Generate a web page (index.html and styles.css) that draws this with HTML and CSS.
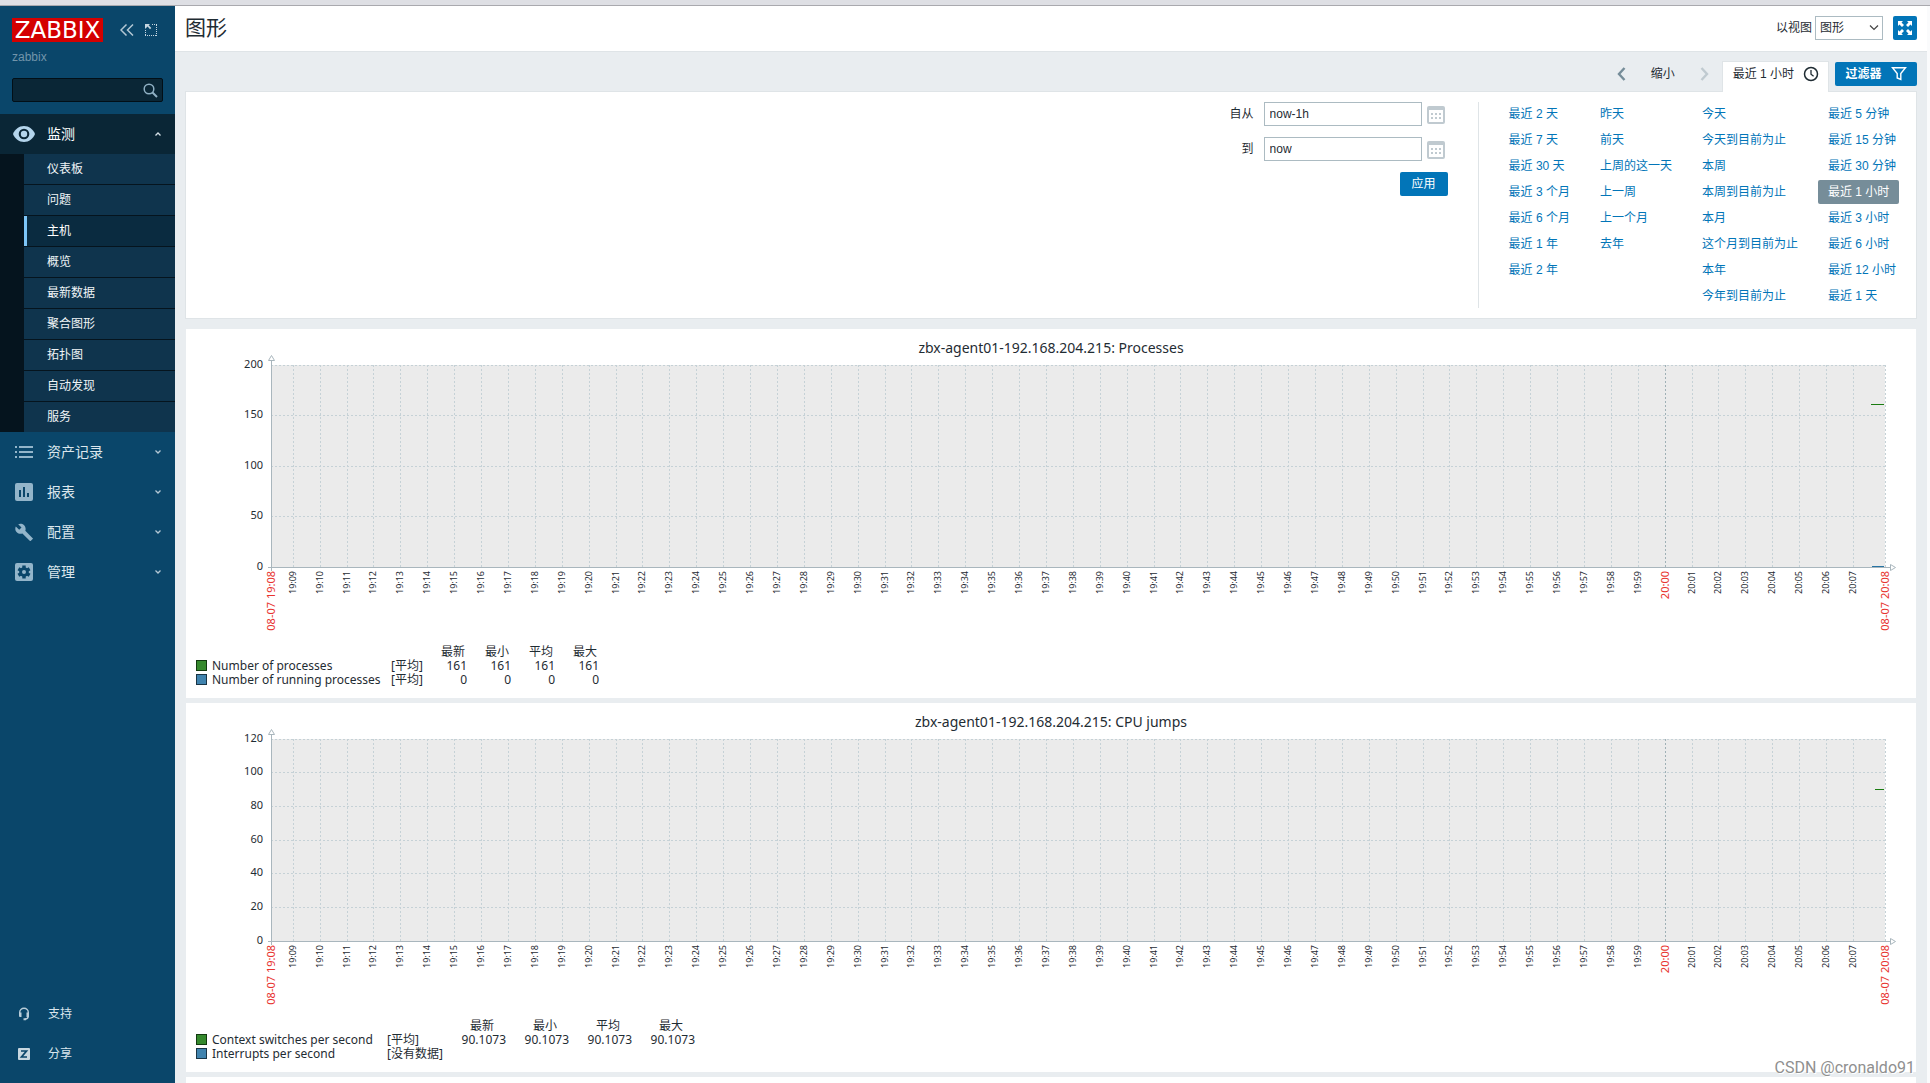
FILE: index.html
```html
<!DOCTYPE html>
<html lang="zh-CN">
<head>
<meta charset="utf-8">
<meta name="viewport" content="width=device-width, initial-scale=1">
<title>图形 - Zabbix</title>
<link rel="stylesheet" href="styles.css">
</head>
<body>
<div class="topline"></div>
<div class="shell">
  <aside class="sidebar">
    <div class="brand">
      <a class="logo" href="#">ZABBIX</a>
      <div class="brand-tools">
        <button class="icon-btn" type="button" aria-label="收起侧边栏"><svg width="14" height="12" viewBox="0 0 14 12"><path d="M6.500 .5 1 6l5.500 5.500M13 .5 7.500 6l5.500 5.500" fill="none" stroke="#b3c7d4" stroke-width="1.500"/></svg></button>
        <button class="icon-btn" type="button" aria-label="隐藏侧边栏"><svg width="12" height="12" viewBox="0 0 12 12"><path d="M7 .5h5M11.500 1v11M0 11.500h11M.5 6v5" fill="none" stroke="#c6d6e0" stroke-dasharray="1 1" shape-rendering="crispEdges"/><path d="M0 0h5L3.700 1.300 6.300 4 5 5.300 2.600 2.600 0 5z" fill="#c6d6e0"/></svg></button>
      </div>
    </div>
    <div class="server">zabbix</div>
    <form class="search">
      <input type="text" aria-label="搜索">
      <button class="icon-btn" type="button" aria-label="搜索"><svg width="15" height="15" viewBox="0 0 15 15"><circle cx="6" cy="6" r="4.800" fill="none" stroke="#8fb0c4" stroke-width="1.500"/><path d="m9.500 9.500 4.500 4.500" stroke="#8fb0c4" stroke-width="2"/></svg></button>
    </form>
    <nav class="menu">
      <a class="menu-item open" href="#">
        <svg width="24" height="18" viewBox="0 0 24 18"><path d="M12 1C7 1 2.800 4.300 1 9c1.800 4.700 6 8 11 8s9.200-3.300 11-8C21.200 4.300 17 1 12 1z" fill="#b4d5ec"/><circle cx="12" cy="9" r="5.300" fill="#0a2636"/><circle cx="12" cy="9" r="3.200" fill="#b4d5ec"/></svg>
        <span>监测</span>
        <svg class="caret" width="8" height="6" viewBox="0 0 8 6"><path d="m1.500 4.500 2.500-2.500 2.500 2.500" fill="none" stroke="#d5e0e7" stroke-width="1.300"/></svg>
      </a>
      <ul class="submenu">
        <li><a href="#">仪表板</a></li>
        <li><a href="#">问题</a></li>
        <li><a class="current" href="#">主机</a></li>
        <li><a href="#">概览</a></li>
        <li><a href="#">最新数据</a></li>
        <li><a href="#">聚合图形</a></li>
        <li><a href="#">拓扑图</a></li>
        <li><a href="#">自动发现</a></li>
        <li><a href="#">服务</a></li>
      </ul>
      <a class="menu-item" href="#">
        <svg width="24" height="18" viewBox="0 0 24 18"><path d="M3 4h2M7 4h14M3 9h2M7 9h14M3 14h2M7 14h14" stroke="#93b5ca" stroke-width="2"/></svg>
        <span>资产记录</span>
        <svg class="caret" width="8" height="6" viewBox="0 0 8 6"><path d="m1.500 1.500 2.500 2.500 2.500-2.500" fill="none" stroke="#b3c7d4" stroke-width="1.300"/></svg>
      </a>
      <a class="menu-item" href="#">
        <svg width="24" height="18" viewBox="0 0 24 18"><rect x="3" width="18" height="18" rx="2" fill="#93b5ca"/><path d="M8 7v7M12 4v10M16 10v4" stroke="#0a466a" stroke-width="2"/></svg>
        <span>报表</span>
        <svg class="caret" width="8" height="6" viewBox="0 0 8 6"><path d="m1.500 1.500 2.500 2.500 2.500-2.500" fill="none" stroke="#b3c7d4" stroke-width="1.300"/></svg>
      </a>
      <a class="menu-item" href="#">
        <svg width="24" height="18" viewBox="0 0 24 18"><path d="m20.700 15.200-7.400-7.400c.7-1.900.3-4.100-1.200-5.600C10.400.6 8.100.3 6.200 1.200l3.300 3.300-2.300 2.300L3.800 3.500c-.9 1.900-.6 4.200 1 5.800 1.500 1.500 3.700 1.900 5.600 1.200l7.300 7.200c.4.4.9.4 1.200 0l1.800-1.800c.4-.3.3-.7 0-.7z" fill="#93b5ca"/></svg>
        <span>配置</span>
        <svg class="caret" width="8" height="6" viewBox="0 0 8 6"><path d="m1.500 1.500 2.500 2.500 2.500-2.500" fill="none" stroke="#b3c7d4" stroke-width="1.300"/></svg>
      </a>
      <a class="menu-item" href="#">
        <svg width="24" height="18" viewBox="0 0 24 18"><rect x="3" width="18" height="18" rx="2" fill="#93b5ca"/><circle cx="12" cy="9" r="4.800" fill="#0a466a"/><path d="M12 2.500v13M6.400 5.700l11.200 6.600M6.400 12.300l11.200-6.600" stroke="#0a466a" stroke-width="3.400"/><circle cx="12" cy="9" r="2" fill="#93b5ca"/></svg>
        <span>管理</span>
        <svg class="caret" width="8" height="6" viewBox="0 0 8 6"><path d="m1.500 1.500 2.500 2.500 2.500-2.500" fill="none" stroke="#b3c7d4" stroke-width="1.300"/></svg>
      </a>
    </nav>
    <nav class="menu-foot">
      <a class="foot-item" href="#">
        <svg width="24" height="14" viewBox="0 0 24 14"><path d="M7.700 8V5.500a4.300 4.300 0 0 1 8.600 0V9c0 2-1 3-3.300 3.300" fill="none" stroke="#b9cdd9" stroke-width="1.400"/><path d="M7 5.500h2.500v4.500H8.300C7.500 10 7 9.500 7 8.500zM14.500 5.500H17v3c0 1-.5 1.500-1.300 1.500h-1.200zM11.500 11.300H14v2h-2.500z" fill="#b9cdd9"/></svg>
        <span>支持</span>
      </a>
      <a class="foot-item" href="#">
        <svg width="24" height="14" viewBox="0 0 24 14"><rect x="6" y="1" width="12" height="12" rx="1" fill="#c8d7e0"/><path d="M9 4h5.500L9.500 10H15" fill="none" stroke="#0a466a" stroke-width="1.700"/></svg>
        <span>分享</span>
      </a>
    </nav>
  </aside>

  <main class="content">
    <header class="page-head">
      <h1>图形</h1>
      <div class="head-tools">
        <label for="view-as">以视图</label>
        <span class="select-wrap">
          <select id="view-as"><option>图形</option><option>数值</option></select>
          <svg width="10" height="6" viewBox="0 0 10 6"><path d="m1 .5 4 4 4-4" fill="none" stroke="#444" stroke-width="1.200"/></svg>
        </span>
        <button class="btn square" type="button" aria-label="全屏"><svg width="14" height="14" viewBox="0 0 14 14"><path d="M0 0h5L3.500 1.500 6 4 4 6 1.500 3.500 0 5zM14 0v5l-1.500-1.500L10 6 8 4l2.500-2.500L9 0zM0 14V9l1.500 1.500L4 8l2 2-2.500 2.500L5 14zM14 14H9l1.500-1.500L8 10l2-2 2.500 2.500L14 9z" fill="#fff"/></svg></button>
      </div>
    </header>

    <section class="filter">
      <div class="filter-bar">
        <button class="icon-btn arrow" type="button" aria-label="前一时段"><svg width="9" height="14" viewBox="0 0 9 14"><path d="M7.500 1 2 7l5.500 6" fill="none" stroke="#768d99" stroke-width="2.400"/></svg></button>
        <button class="zoom-out" type="button">缩小</button>
        <button class="icon-btn arrow" type="button" aria-label="后一时段"><svg width="9" height="14" viewBox="0 0 9 14"><path d="m1.500 1 5.500 6-5.500 6" fill="none" stroke="#c0cad0" stroke-width="2.400"/></svg></button>
        <a class="tab" href="#">最近 1 小时<svg width="16" height="16" viewBox="0 0 16 16"><circle cx="8" cy="8" r="6.500" fill="none" stroke="#1f2c33" stroke-width="1.500"/><path d="M8 4v4.300l2.600 2" fill="none" stroke="#1f2c33" stroke-width="1.300"/></svg></a>
        <button class="btn filter-btn" type="button">过滤器<svg width="16" height="16" viewBox="0 0 16 16"><path d="M1.500 1.700h13L9.800 7.500v6L6.200 12V7.500z" fill="none" stroke="#fff" stroke-width="1.400"/></svg></button>
      </div>
      <div class="filter-panel">
        <form class="range">
          <label for="from">自从</label>
          <input id="from" type="text" value="now-1h">
          <button class="icon-btn" type="button" aria-label="选择开始时间"><svg width="18" height="18" viewBox="0 0 18 18"><rect x="1" y="1" width="16" height="16" rx="1" fill="#fff" stroke="#c0cad0" stroke-width="2"/><path d="M1 2.500h16" stroke="#c0cad0" stroke-width="3"/><path d="M4 8h10M4 12h10" stroke="#c0cad0" stroke-width="2" stroke-dasharray="2 2"/></svg></button>
          <label for="to">到</label>
          <input id="to" type="text" value="now">
          <button class="icon-btn" type="button" aria-label="选择结束时间"><svg width="18" height="18" viewBox="0 0 18 18"><rect x="1" y="1" width="16" height="16" rx="1" fill="#fff" stroke="#c0cad0" stroke-width="2"/><path d="M1 2.500h16" stroke="#c0cad0" stroke-width="3"/><path d="M4 8h10M4 12h10" stroke="#c0cad0" stroke-width="2" stroke-dasharray="2 2"/></svg></button>
          <button class="btn apply" type="button">应用</button>
        </form>
        <div class="quick">
          <ul>
            <li><a href="#">最近 2 天</a></li>
            <li><a href="#">最近 7 天</a></li>
            <li><a href="#">最近 30 天</a></li>
            <li><a href="#">最近 3 个月</a></li>
            <li><a href="#">最近 6 个月</a></li>
            <li><a href="#">最近 1 年</a></li>
            <li><a href="#">最近 2 年</a></li>
          </ul>
          <ul>
            <li><a href="#">昨天</a></li>
            <li><a href="#">前天</a></li>
            <li><a href="#">上周的这一天</a></li>
            <li><a href="#">上一周</a></li>
            <li><a href="#">上一个月</a></li>
            <li><a href="#">去年</a></li>
          </ul>
          <ul>
            <li><a href="#">今天</a></li>
            <li><a href="#">今天到目前为止</a></li>
            <li><a href="#">本周</a></li>
            <li><a href="#">本周到目前为止</a></li>
            <li><a href="#">本月</a></li>
            <li><a href="#">这个月到目前为止</a></li>
            <li><a href="#">本年</a></li>
            <li><a href="#">今年到目前为止</a></li>
          </ul>
          <ul>
            <li><a href="#">最近 5 分钟</a></li>
            <li><a href="#">最近 15 分钟</a></li>
            <li><a href="#">最近 30 分钟</a></li>
            <li><a class="selected" href="#">最近 1 小时</a></li>
            <li><a href="#">最近 3 小时</a></li>
            <li><a href="#">最近 6 小时</a></li>
            <li><a href="#">最近 12 小时</a></li>
            <li><a href="#">最近 1 天</a></li>
          </ul>
        </div>
      </div>
    </section>

    <section class="graphs">
      <article class="graph">
        <h2>zbx-agent01-192.168.204.215: Processes</h2>
        <div class="plot" data-max="200" data-step="50" data-series="161:#1a7c11:14,0:#2774a4:13"></div>
        <table class="legend">
          <thead><tr><th class="name"></th><th class="fn"></th><th>最新</th><th>最小</th><th>平均</th><th>最大</th></tr></thead>
          <tbody>
            <tr><td class="name"><i class="swatch green"></i>Number of processes</td><td class="fn">[平均]</td><td>161</td><td>161</td><td>161</td><td>161</td></tr>
            <tr><td class="name"><i class="swatch blue"></i>Number of running processes</td><td class="fn">[平均]</td><td>0</td><td>0</td><td>0</td><td>0</td></tr>
          </tbody>
        </table>
      </article>
      <article class="graph">
        <h2>zbx-agent01-192.168.204.215: CPU jumps</h2>
        <div class="plot" data-max="120" data-step="20" data-series="90.1073:#1a7c11:10"></div>
        <table class="legend wide">
          <thead><tr><th class="name"></th><th class="fn"></th><th>最新</th><th>最小</th><th>平均</th><th>最大</th></tr></thead>
          <tbody>
            <tr><td class="name"><i class="swatch green"></i>Context switches per second</td><td class="fn">[平均]</td><td>90.1073</td><td>90.1073</td><td>90.1073</td><td>90.1073</td></tr>
            <tr><td class="name"><i class="swatch blue"></i>Interrupts per second</td><td class="fn">[没有数据]</td><td></td><td></td><td></td><td></td></tr>
          </tbody>
        </table>
      </article>
      <article class="graph"></article>
    </section>
  </main>
</div>
<div class="watermark">CSDN @cronaldo91</div>
<script src="charts.js"></script>
</body>
</html>
```
FILE: styles.css
```css
* { box-sizing: border-box; }

body {
  margin: 0;
  height: 100vh;
  display: flex;
  flex-direction: column;
  overflow: hidden;
  background: #e9edf0;
  color: #1f2c33;
  font: 12px/16px "Liberation Sans", "Noto Sans CJK SC", sans-serif;
}

a { color: inherit; text-decoration: none; }
ul { list-style: none; margin: 0; padding: 0; }
svg { display: block; flex: none; }
button, input, select { font: inherit; color: inherit; margin: 0; }
.icon-btn { border: 0; padding: 0; background: none; }

.topline {
  flex: none;
  height: 6px;
  background: #dedfe4;
  border-bottom: 1px solid #a9a9ae;
}

.shell { flex: 1; min-height: 0; display: flex; border-right: 3px solid #fafbfc; }

/* Sidebar */
.sidebar {
  flex: none;
  width: 175px;
  display: flex;
  flex-direction: column;
  background: #0a466a;
  color: #dbe6ed;
}
.brand { display: flex; align-items: center; justify-content: space-between; padding: 12px 18px 0 12px; }
.logo {
  width: 91px;
  background: #d40000;
  color: #fff;
  font: 23px/24px "DejaVu Sans", sans-serif;
  text-align: center;
}
.brand-tools { display: flex; align-items: center; gap: 11px; }
.server { padding: 7px 12px 0; color: #7295ab; }
.search {
  display: flex;
  align-items: center;
  height: 24px;
  margin: 13px 12px 12px;
  padding-right: 4px;
  background: #0a2636;
  border: 1px solid #020f17;
  border-radius: 2px;
}
.search input { flex: 1; min-width: 0; border: 0; background: none; outline: 0; }

.menu-item {
  display: flex;
  align-items: center;
  gap: 11px;
  height: 40px;
  padding: 0 13px 0 12px;
  font-size: 14px;
}
.menu-item.open { background: #0a2636; color: #fff; }
.caret { margin-left: auto; }
.submenu {
  border-left: 24px solid #05141e;
  background: #05141e;
  display: grid;
  gap: 1px;
}
.submenu a { display: block; height: 30px; padding-left: 23px; line-height: 30px; background: #0f344d; color: #f0f4f7; }
.submenu .current { background: #0a2b40; border-left: 3px solid #7dc5f7; padding-left: 20px; color: #fff; }
.menu-foot { margin-top: auto; padding-bottom: 9px; }
.foot-item { display: flex; align-items: center; gap: 12px; height: 40px; padding-left: 12px; }

/* Page header */
.content { flex: 1; min-width: 0; display: flex; flex-direction: column; overflow: hidden; }
.page-head {
  flex: none;
  display: flex;
  align-items: center;
  justify-content: space-between;
  height: 46px;
  padding: 0 10px 1px;
  background: #fff;
  border-bottom: 1px solid #dfe4e7;
}
.page-head h1 { margin: 0; font-size: 21px; line-height: 32px; font-weight: 400; }
.head-tools { display: flex; align-items: center; }
.select-wrap { display: grid; align-items: center; margin: 0 10px 0 3px; }
.select-wrap > * { grid-area: 1 / 1; }
.select-wrap select {
  width: 68px;
  height: 24px;
  padding: 0 4px;
  appearance: none;
  border: 1px solid #acbbc2;
  border-radius: 0;
  background: #fff;
}
.select-wrap svg { justify-self: end; margin-right: 4px; pointer-events: none; }
.btn {
  display: flex;
  align-items: center;
  justify-content: center;
  height: 24px;
  border: 0;
  border-radius: 2px;
  background: #0275b8;
  color: #fff;
}
.btn.square { width: 24px; padding: 0; }

/* Time filter */
.filter { flex: none; margin: 9px 10px 10px; }
.filter-bar { display: flex; justify-content: flex-end; align-items: center; height: 30px; padding-bottom: 4px; }
.zoom-out { border: 0; background: none; padding: 0 25px; }
.tab {
  display: flex;
  align-items: center;
  align-self: flex-start;
  gap: 9px;
  height: 31px;
  margin: 0 6px 0 13px;
  padding: 0 9px 7px 10px;
  background: #fff;
  border: 1px solid #dfe4e7;
  border-bottom: 0;
  position: relative;
}
.filter-btn { width: 82px; gap: 9px; padding: 0; font-weight: 700; }
.filter-panel {
  display: flex;
  justify-content: flex-end;
  padding: 10px;
  background: #fff;
  border: 1px solid #dfe4e7;
}
.range {
  display: grid;
  grid-template-columns: auto 158px 16px;
  grid-template-rows: 24px 24px 24px;
  gap: 11px 10px;
  align-items: center;
  padding-right: 30px;
}
.range label { text-align: right; }
.range input { height: 24px; padding: 0 5px; border: 1px solid #acbbc2; background: #fff; outline: 0; }
.range .icon-btn { margin: 2px 0 0 -5px; }
.range .apply { grid-column: 2 / 4; justify-self: end; width: 48px; padding: 0; }
.quick { display: flex; gap: 10px; padding-left: 20px; border-left: 1px solid #dfe4e7; }
.quick ul { display: grid; grid-auto-rows: 24px; gap: 2px; align-content: start; justify-items: start; }
.quick a { display: block; height: 24px; padding: 0 10px; line-height: 24px; border-radius: 2px; color: #0275b8; white-space: nowrap; }
.quick .selected { background: #768d99; color: #fff; }

/* Graphs */
.graphs { display: flex; flex-direction: column; gap: 5px; padding: 0 11px; }
.graph {
  flex: none;
  min-height: 60px;
  padding: 0 0 11px;
  background: #fff;
  font-family: "Noto Sans", "Noto Sans CJK SC", sans-serif;
}
.graph h2 { margin: 0; padding-top: 10px; font-size: 14px; line-height: 18px; font-weight: 400; text-align: center; }
.plot { height: 288px; }
.plot svg { width: 100%; height: 100%; overflow: visible; }
.plot text { fill: #1f2c33; }
.plot .y-label { font-size: 11px; text-anchor: end; }
.plot .x-label { font-size: 9px; text-anchor: end; }
.plot .x-label.major { font-size: 11px; fill: #e8342f; }
.plot .area { fill: #ebebeb; }
.plot .grid { stroke: #c5d1d6; stroke-dasharray: 2 2; }
.plot .grid.major { stroke: #9fb0b6; }
.plot .axis { stroke: #a9b6bd; }
.plot .arrow { fill: #fff; stroke: #a9b6bd; }

.legend { margin-left: 10px; border-collapse: collapse; font-size: 12px; line-height: 14px; table-layout: fixed; width: 403px; }
.legend th, .legend td { height: 14px; padding: 0; font-weight: 400; text-align: right; white-space: nowrap; }
.legend th { width: 44px; padding-right: 2px; }
.legend .name { width: 195px; text-align: left; }
.legend .fn { width: 32px; text-align: left; }
.legend.wide { width: 499px; }
.legend.wide .name { width: 191px; }
.legend.wide .fn { width: 56px; }
.legend.wide th { width: 63px; padding-right: 12px; }
.swatch { display: inline-block; width: 11px; height: 11px; margin-right: 5px; vertical-align: -1px; border: 1px solid; }
.swatch.green { background: #35892d; border-color: #123a10; }
.swatch.blue { background: #4083ae; border-color: #1a3546; }

.watermark {
  position: absolute;
  right: 15px;
  bottom: 4px;
  font: 16px/22px Roboto, "Liberation Sans", sans-serif;
  color: #8f8f8f;
  text-shadow: 1px 1px 0 #fff;
}
```
FILE: charts.js
```js
const NS = 'http://www.w3.org/2000/svg';
const PAD = { left: 85, right: 31, top: 8, height: 202 };
const START_OFFSET = 49 / 3600;

function add(parent, name, attrs, text) {
  const el = document.createElementNS(NS, name);
  for (const key in attrs) el.setAttribute(key, attrs[key]);
  if (text !== undefined) el.textContent = text;
  parent.appendChild(el);
  return el;
}

function line(svg, x1, y1, x2, y2, cls) {
  return add(svg, 'path', { d: `M${x1} ${y1}L${x2} ${y2}`, class: cls, 'shape-rendering': 'crispEdges', fill: 'none' });
}

function xLabel(svg, x, text, major) {
  const y = PAD.top + PAD.height + 4;
  const shift = major ? 4 : 3;
  add(svg, 'text', {
    class: major ? 'x-label major' : 'x-label',
    transform: `translate(${x + shift} ${y}) rotate(-90)`
  }, text);
}

function draw(box) {
  box.textContent = '';
  const svg = add(box, 'svg', {});
  const left = PAD.left;
  const right = Math.round(box.clientWidth) - PAD.right;
  const top = PAD.top;
  const bottom = top + PAD.height;
  const width = right - left;
  const max = Number(box.dataset.max);
  const step = Number(box.dataset.step);

  add(svg, 'rect', { x: left, y: top, width, height: PAD.height, class: 'area' });

  for (let v = 0; v <= max; v += step) {
    const y = Math.floor(bottom - v / max * PAD.height);
    if (v > 0) line(svg, left, y + 0.5, right, y + 0.5, 'grid');
    add(svg, 'text', { x: left - 8, y: y + 3, class: 'y-label' }, String(v));
  }

  for (let m = 0; m < 59; m++) {
    const minute = 9 + m;
    const x = Math.floor(left + 0.3 + width * (START_OFFSET + m / 60));
    const major = minute === 60;
    line(svg, x + 0.5, top, x + 0.5, bottom, major ? 'grid major' : 'grid');
    const hour = 19 + Math.floor(minute / 60);
    xLabel(svg, x, `${hour}:${String(minute % 60).padStart(2, '0')}`, major);
  }
  line(svg, right + 0.5, top, right + 0.5, bottom, 'grid');
  xLabel(svg, left, '08-07 19:08', true);
  xLabel(svg, right, '08-07 20:08', true);

  line(svg, left + 0.5, top - 5, left + 0.5, bottom + 4, 'axis');
  line(svg, left - 3, bottom + 0.5, right + 5, bottom + 0.5, 'axis');
  add(svg, 'path', { d: `M${left - 2.5} ${top - 4.5}h6l-3 -5z`, class: 'arrow' });
  add(svg, 'path', { d: `M${right + 5.5} ${bottom - 2.5}v6l5 -3z`, class: 'arrow' });

  for (const item of box.dataset.series.split(',')) {
    const [value, color, length] = item.split(':');
    const y = Math.floor(bottom - value / max * PAD.height) - (Number(value) === 0 ? 1 : 0) + 0.5;
    line(svg, right - length, y, right - 1, y, '').setAttribute('stroke', color);
  }
}

function drawAll() {
  document.querySelectorAll('.plot').forEach(draw);
}

window.addEventListener('resize', drawAll);
drawAll();
```
